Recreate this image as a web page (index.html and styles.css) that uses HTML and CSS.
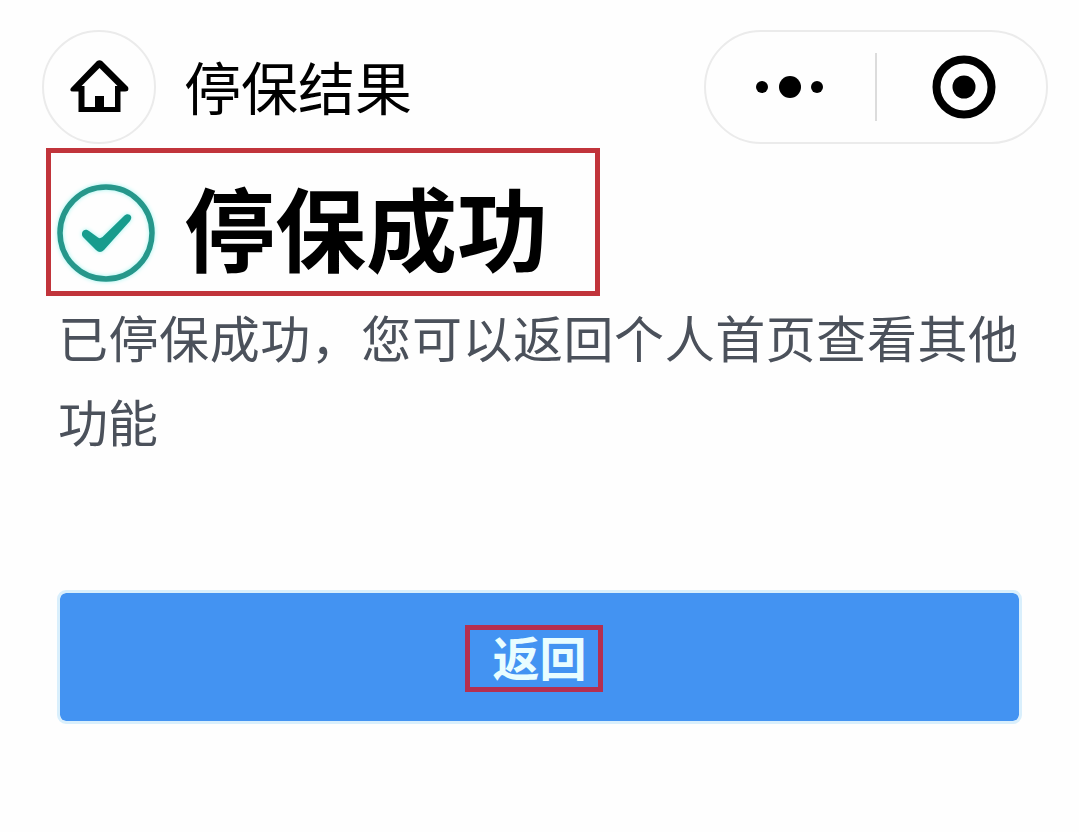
FILE: index.html
```html
<!DOCTYPE html>
<html lang="zh-CN">
<head>
    <meta charset="UTF-8">
    <meta name="viewport" content="width=device-width, initial-scale=1.0">
    <title>停保结果</title>
    <link rel="stylesheet" href="styles.css">
</head>
<body>
    <header class="navbar">
        <button type="button" class="home-btn" aria-label="首页">
            <svg width="60" height="56" viewBox="0 0 60 56">
                <path fill-rule="evenodd" d="M28 2 Q30.5 0.5 33 2 L59 28 Q60.5 32.5 56 32.5 H51.5 V53 H9.5 V32.5 H4 Q0 32.5 2 29 Z M30.5 9 L12.5 27 H15.5 V48 H26 V37 H35 V48 H46 V27 H48.5 Z"/>
            </svg>
        </button>
        <span class="nav-title">停保结果</span>
        <div class="capsule">
            <button type="button" class="capsule-btn" aria-label="更多">
                <svg width="70" height="24" viewBox="0 0 70 24">
                    <circle cx="6" cy="12" r="6"/>
                    <circle cx="34" cy="12" r="11"/>
                    <circle cx="61" cy="12" r="6"/>
                </svg>
            </button>
            <span class="capsule-line"></span>
            <button type="button" class="capsule-btn" aria-label="关闭">
                <svg width="68" height="64" viewBox="-4 0 68 64">
                    <circle cx="32" cy="32" r="27.5" fill="none" stroke="#000" stroke-width="8"/>
                    <circle cx="32" cy="32" r="11.5"/>
                </svg>
            </button>
        </div>
    </header>

    <main class="result">
        <div class="result-head">
            <svg class="result-icon" width="98" height="98" viewBox="0 0 98 98">
                <circle cx="49" cy="49" r="46" fill="none" stroke="#26978b" stroke-width="5.5"/>
                <path d="M26 53 C23 49 27 43 32 47 L41 53.5 Q43 55 45.5 53 L67 32 C71 28 77 32 73 37 L47 66 Q43 70 39 66 Z" fill="#179c8d"/>
            </svg>
            <h1 class="result-title">停保成功</h1>
        </div>
        <p class="result-desc">已停保成功，您可以返回个人首页查看其他功能</p>
        <button type="button" class="back-btn"><span class="back-text">返回</span></button>
    </main>
</body>
</html>
```

FILE: styles.css
```css
* {
    box-sizing: border-box;
}

body {
    margin: 0;
    background: #fefefe;
    color: #000;
    font-family: 'Noto Sans CJK SC', sans-serif;
}

button {
    padding: 0;
    font-family: inherit;
    cursor: pointer;
}

svg {
    display: block;
}

/* top bar */
.navbar {
    display: flex;
    align-items: center;
    padding: 30px 31px 0 42px;
}

.home-btn {
    width: 114px;
    height: 114px;
    display: flex;
    align-items: center;
    justify-content: center;
    background: transparent;
    border: 2px solid #ebebeb;
    border-radius: 50%;
}

.nav-title {
    margin-left: 28px;
    padding-bottom: 4px;
    font-size: 57px;
    line-height: 80px;
}

.capsule {
    display: flex;
    align-items: center;
    width: 344px;
    height: 114px;
    margin-left: auto;
    border: 2px solid #ebebeb;
    border-radius: 57px;
}

.capsule-btn {
    flex: 1;
    height: 100%;
    display: flex;
    align-items: center;
    justify-content: center;
    background: transparent;
    border: none;
}

.capsule-line {
    width: 2px;
    height: 68px;
    background: #dcdcdc;
}

/* result */
.result {
    padding: 4px 57px 0;
}

.result-head {
    display: flex;
    align-items: flex-start;
    width: 554px;
    height: 148px;
    margin-left: -11px;
    padding: 17px 6px 0;
    border: 5px solid #c1343b;
}

.result-icon {
    margin-top: 14px;
    filter: drop-shadow(0 0 2px #9ff5f0);
}

.result-title {
    margin: 0 0 0 29px;
    font-size: 91px;
    font-weight: bold;
    line-height: 110px;
}

.result-desc {
    margin: -2px 0 0;
    padding: 0 4px 128px 1px;
    color: #4b515b;
    font-size: 50px;
    line-height: 84px;
    text-align: justify;
}

.back-btn {
    display: block;
    width: 100%;
    height: 134px;
    padding-bottom: 2px;
    background: #4393f2;
    background-clip: padding-box;
    border: 3px solid #d9effc;
    border-radius: 9px;
    color: #e9fdff;
    font-size: 47px;
    font-weight: bold;
    line-height: 62px;
}

.back-text {
    position: relative;
    display: inline-block;
}

.back-text::before {
    content: '';
    position: absolute;
    top: 0;
    bottom: -5px;
    left: -28px;
    right: -16px;
    border: 5px solid #b52f50;
}
```
